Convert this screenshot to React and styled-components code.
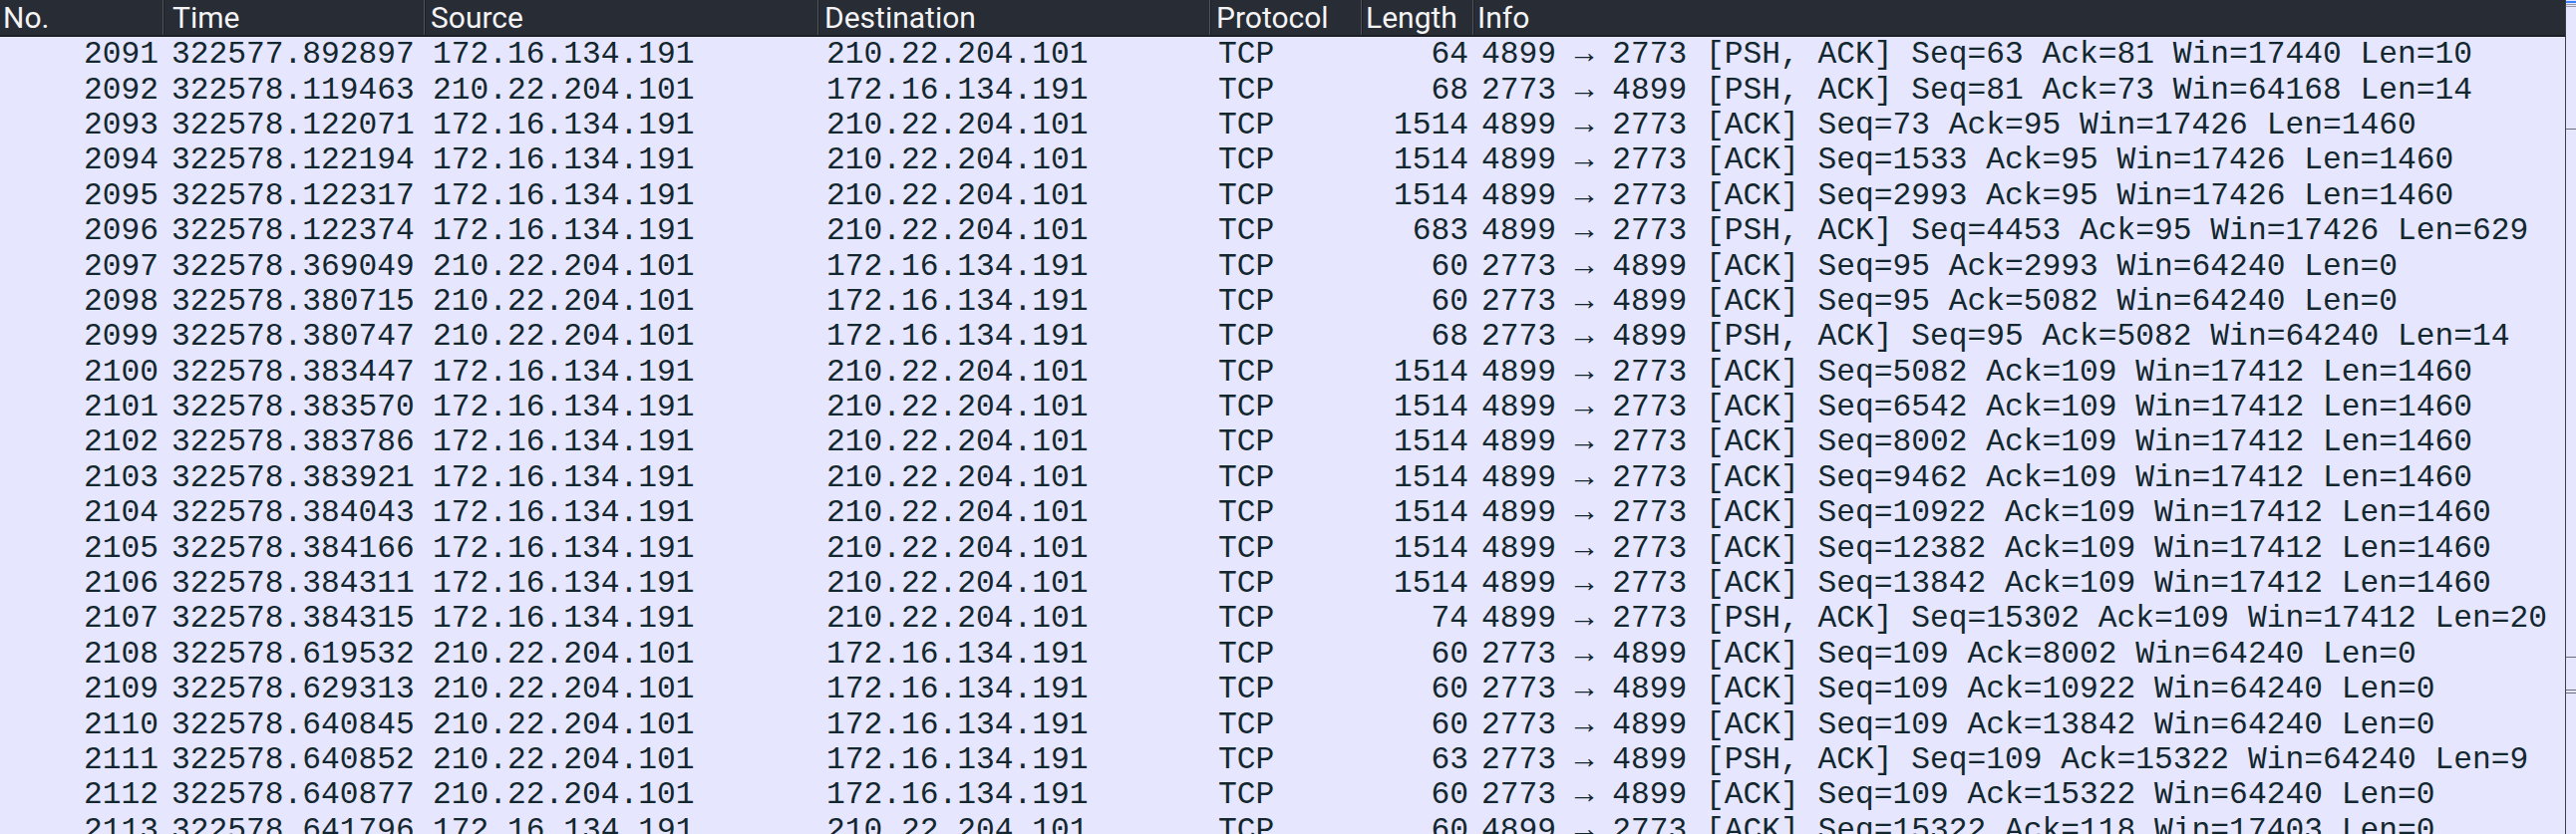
import React from "react";
import styled, { createGlobalStyle } from "styled-components";

const GlobalStyle = createGlobalStyle`
  html, body { margin: 0; padding: 0; overflow: hidden; background: #e7e6ff; }
  #root { height: 100vh; }
`;

const COLS = "165px 262px 395px 393px 152px 112px 1fr";

const Frame = styled.div`
  display: flex;
  height: 100vh;
  width: 100vw;
  overflow: hidden;
`;

const Table = styled.div`
  flex: 1;
  min-width: 0;
  display: flex;
  flex-direction: column;
`;

const HeaderRow = styled.div`
  display: grid;
  grid-template-columns: ${COLS};
  height: 35px;
  background: #282c34;
  border-bottom: 2px solid #1c1f25;
  flex-shrink: 0;
`;

const HeaderCell = styled.div`
  display: flex;
  align-items: center;
  padding-left: ${(p) => p.$pad ?? 7}px;
  color: #f4f4f6;
  font-family: Roboto, "Noto Sans", sans-serif;
  font-size: 30px;
  white-space: nowrap;
  border-right: ${(p) => (p.$last ? "none" : "1px solid #1c1f25")};
  box-shadow: ${(p) => (p.$last ? "none" : "inset -1px 0 #4e535c")};
`;

const Body = styled.div`
  flex: 1;
  overflow: hidden;
  background: #e7e6ff;
`;

const Row = styled.div`
  display: grid;
  grid-template-columns: ${COLS};
  height: 35.4px;
  align-items: center;
  background: #e7e6ff;
  color: #12272e;
  font-family: "Liberation Mono", "DejaVu Sans Mono", monospace;
  font-size: 31.25px;
  white-space: nowrap;
`;

const Cell = styled.div`
  overflow: hidden;
  text-align: ${(p) => (p.$right ? "right" : "left")};
  padding: ${(p) => (p.$right ? "0 6px 0 0" : "0 0 0 7px")};
`;

const Scrollbar = styled.div`
  position: relative;
  width: 10px;
  flex-shrink: 0;
  background: #e7e6ff;
  border-left: 1px solid #3a3e47;
`;

const Mark = styled.div`
  position: absolute;
  left: 0;
  right: 0;
  top: ${(p) => p.$top}px;
  height: ${(p) => p.$h ?? 1}px;
  background: ${(p) => p.$color};
`;

const A = "172.16.134.191";
const B = "210.22.204.101";
const out = (s) => [A, B, "4899 → 2773 " + s];
const inn = (s) => [B, A, "2773 → 4899 " + s];

const raw = [
  [2091, "322577.892897", 64, out("[PSH, ACK] Seq=63 Ack=81 Win=17440 Len=10")],
  [2092, "322578.119463", 68, inn("[PSH, ACK] Seq=81 Ack=73 Win=64168 Len=14")],
  [2093, "322578.122071", 1514, out("[ACK] Seq=73 Ack=95 Win=17426 Len=1460")],
  [2094, "322578.122194", 1514, out("[ACK] Seq=1533 Ack=95 Win=17426 Len=1460")],
  [2095, "322578.122317", 1514, out("[ACK] Seq=2993 Ack=95 Win=17426 Len=1460")],
  [2096, "322578.122374", 683, out("[PSH, ACK] Seq=4453 Ack=95 Win=17426 Len=629")],
  [2097, "322578.369049", 60, inn("[ACK] Seq=95 Ack=2993 Win=64240 Len=0")],
  [2098, "322578.380715", 60, inn("[ACK] Seq=95 Ack=5082 Win=64240 Len=0")],
  [2099, "322578.380747", 68, inn("[PSH, ACK] Seq=95 Ack=5082 Win=64240 Len=14")],
  [2100, "322578.383447", 1514, out("[ACK] Seq=5082 Ack=109 Win=17412 Len=1460")],
  [2101, "322578.383570", 1514, out("[ACK] Seq=6542 Ack=109 Win=17412 Len=1460")],
  [2102, "322578.383786", 1514, out("[ACK] Seq=8002 Ack=109 Win=17412 Len=1460")],
  [2103, "322578.383921", 1514, out("[ACK] Seq=9462 Ack=109 Win=17412 Len=1460")],
  [2104, "322578.384043", 1514, out("[ACK] Seq=10922 Ack=109 Win=17412 Len=1460")],
  [2105, "322578.384166", 1514, out("[ACK] Seq=12382 Ack=109 Win=17412 Len=1460")],
  [2106, "322578.384311", 1514, out("[ACK] Seq=13842 Ack=109 Win=17412 Len=1460")],
  [2107, "322578.384315", 74, out("[PSH, ACK] Seq=15302 Ack=109 Win=17412 Len=20")],
  [2108, "322578.619532", 60, inn("[ACK] Seq=109 Ack=8002 Win=64240 Len=0")],
  [2109, "322578.629313", 60, inn("[ACK] Seq=109 Ack=10922 Win=64240 Len=0")],
  [2110, "322578.640845", 60, inn("[ACK] Seq=109 Ack=13842 Win=64240 Len=0")],
  [2111, "322578.640852", 63, inn("[PSH, ACK] Seq=109 Ack=15322 Win=64240 Len=9")],
  [2112, "322578.640877", 60, inn("[ACK] Seq=109 Ack=15322 Win=64240 Len=0")],
  [2113, "322578.641796", 60, out("[ACK] Seq=15322 Ack=118 Win=17403 Len=0")],
];

const headers = [
  { t: "No.", pad: 3 },
  { t: "Time", pad: 8 },
  { t: "Source", pad: 5 },
  { t: "Destination", pad: 5 },
  { t: "Protocol", pad: 5 },
  { t: "Length", pad: 3 },
  { t: "Info", pad: 3 },
];

export default function App() {
  return (
    <>
      <GlobalStyle />
      <Frame>
        <Table>
          <HeaderRow>
            {headers.map((h, i) => (
              <HeaderCell key={h.t} $pad={h.pad} $last={i === headers.length - 1}>
                {h.t}
              </HeaderCell>
            ))}
          </HeaderRow>
          <Body>
            {raw.map(([no, time, len, [src, dst, info]]) => (
              <Row key={no}>
                <Cell $right>{no}</Cell>
                <Cell>{time}</Cell>
                <Cell>{src}</Cell>
                <Cell>{dst}</Cell>
                <Cell>TCP</Cell>
                <Cell $right>{len}</Cell>
                <Cell>{info}</Cell>
              </Row>
            ))}
          </Body>
        </Table>
        <Scrollbar>
          <Mark $top={1} $h={2} $color="#3b82f6" />
          <Mark $top={4} $color="#9a9aa6" />
          <Mark $top={6} $color="#9a9aa6" />
          <Mark $top={129} $color="#6b6e78" />
          <Mark $top={659} $color="#6b6e78" />
          <Mark $top={692} $color="#6b6e78" />
          <Mark $top={695} $color="#6b6e78" />
        </Scrollbar>
      </Frame>
    </>
  );
}
